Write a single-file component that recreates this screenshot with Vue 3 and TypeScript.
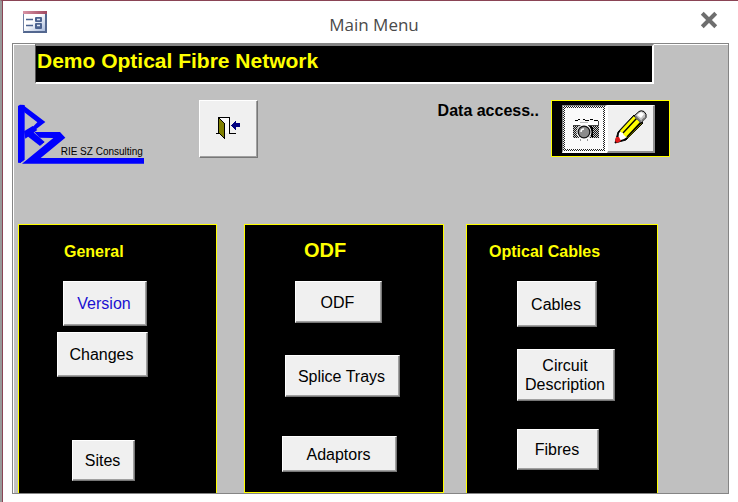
<script setup lang="ts">
import { ref } from 'vue'

interface MenuButton {
  label: string
  name: string
}

interface Panel {
  title: string
  name: string
  buttons: MenuButton[]
}

const panels: Panel[] = [
  {
    title: 'General',
    name: 'general',
    buttons: [
      { label: 'Version', name: 'version' },
      { label: 'Changes', name: 'changes' },
      { label: 'Sites', name: 'sites' },
    ],
  },
  {
    title: 'ODF',
    name: 'odf',
    buttons: [
      { label: 'ODF', name: 'frames' },
      { label: 'Splice Trays', name: 'trays' },
      { label: 'Adaptors', name: 'adaptors' },
    ],
  },
  {
    title: 'Optical Cables',
    name: 'optical',
    buttons: [
      { label: 'Cables', name: 'cables' },
      { label: 'Circuit Description', name: 'circuit' },
      { label: 'Fibres', name: 'fibres' },
    ],
  },
]

const access = ref<'view' | 'edit'>('view')
</script>

<template>
  <div class="window">
    <header class="titlebar">
      <svg class="form-icon" viewBox="0 0 24 22" aria-hidden="true">
        <defs>
          <linearGradient id="form-bg" x1="0" y1="0" x2="1" y2="1">
            <stop offset="0.4" stop-color="#ffffff" />
            <stop offset="1" stop-color="#a9bbdc" />
          </linearGradient>
          <linearGradient id="form-bar" x1="0" y1="0" x2="1" y2="0">
            <stop offset="0" stop-color="#d995a6" />
            <stop offset="1" stop-color="#a04860" />
          </linearGradient>
        </defs>
        <rect x="0" y="0" width="24" height="22" fill="#53678f" />
        <rect x="1" y="3" width="21" height="17" fill="url(#form-bg)" />
        <rect x="0" y="0" width="24" height="3" fill="url(#form-bar)" />
        <path d="M0 3V21" stroke="#8d9bb8" />
        <path d="M3 8.5H10M3 14.5H10" stroke="#4b628f" stroke-width="1.6" />
        <rect x="12" y="6" width="7" height="5" rx="1" fill="#4b628f" />
        <rect x="12" y="12" width="7" height="6" rx="1" fill="#4b628f" />
        <path d="M14 8.5H17M14 14.5H17" stroke="#dfe7f5" stroke-width="1.4" />
      </svg>
      <span class="caption">Main Menu</span>
      <button class="close" type="button" aria-label="Close">
        <svg viewBox="0 0 16 16" aria-hidden="true">
          <path d="M2 2L14 14M14 2L2 14" stroke="#6e6e6e" stroke-width="3.6" />
        </svg>
      </button>
    </header>

    <main class="form">
      <h1 class="network">Demo Optical Fibre Network</h1>

      <div class="tools">
        <svg class="logo" viewBox="54 42 378 180" role="img" aria-label="RIE SZ Consulting">
          <g fill="#0000fe">
            <polygon points="54,48 60,44 74,45 74,212 62,219 54,218" />
            <polygon points="68,44 136,96 101,123 90,119 112,97 73,67" />
            <polygon points="98,108 112,120 76,146 72,124" />
            <polygon points="82,124 95,122 135,157 121,169 74,132" />
            <polygon points="103,126 180,126 196,143 122,204 432,204 432,221 66,221 160,144 119,143" />
          </g>
          <path d="M62 220L82 205M119 170L140 153" stroke="#c0c0c0" stroke-width="3" />
          <text class="logo-text" x="182" y="194">RIE SZ Consulting</text>
        </svg>

        <button class="btn exit" type="button" aria-label="Exit">
          <svg viewBox="0 0 26 26" shape-rendering="crispEdges" aria-hidden="true">
            <rect x="3" y="3" width="10" height="15" fill="#fafafa" />
            <path d="M2 2.5H14M13.5 2V19M0 18.5H4M13 18.5H20" stroke="#000" fill="none" />
            <polygon points="2,2 9,8 9,25 2,18" fill="#000" />
            <polygon points="3,4 8,8 8,23 3,18" fill="#808000" />
            <path d="M16 9H17V8H18V7H19V6H20V8H24V12H20V15H19V14H18V13H17V12H16V11H15V10H16Z" fill="#000080" />
          </svg>
        </button>

        <div class="access">
          <span id="access-label" class="access-label">Data access..</span>
          <div class="access-frame" role="group" aria-labelledby="access-label">
            <button
              class="toggle"
              :class="{ pressed: access === 'view' }"
              type="button"
              aria-label="View"
              :aria-pressed="access === 'view'"
              @click="access = 'view'"
            >
              <svg class="camera" viewBox="0 0 28 22" shape-rendering="crispEdges" aria-hidden="true">
                <defs>
                  <pattern id="grip" width="2" height="2" patternUnits="userSpaceOnUse">
                    <rect width="2" height="2" fill="#c8c8c8" />
                    <rect width="1" height="1" fill="#111" />
                    <rect x="1" y="1" width="1" height="1" fill="#111" />
                  </pattern>
                </defs>
                <path d="M3 1.5H6M11 0.5H13M13 1.5H17M18 0.5H21M22 1.5H26M6 0.5H8" stroke="#000" />
                <rect x="1" y="3" width="26" height="4" fill="#fff" />
                <path d="M1 6.5H9M16 6.5H27M26.5 2V8" stroke="#444" />
                <rect x="1" y="7" width="26" height="12" fill="url(#grip)" />
                <path d="M19.5 7V18M18.5 7V17M20.5 8V18" stroke="#000" />
                <path d="M7.5 3.5H15.5" stroke="#bbb" />
                <g shape-rendering="auto">
                  <circle cx="12" cy="13" r="7.5" fill="#fff" />
                  <circle cx="12" cy="13" r="6.5" fill="#111" />
                  <circle cx="12" cy="13" r="5.2" fill="#8b8b8b" />
                  <path d="M9 13A3 3 0 0 1 12 10" stroke="#fff" stroke-width="1.4" fill="none" />
                </g>
                <path d="M8.5 20V22M15.5 20V22" stroke="#999" />
              </svg>
            </button>
            <button
              class="toggle"
              :class="{ pressed: access === 'edit' }"
              type="button"
              aria-label="Edit"
              :aria-pressed="access === 'edit'"
              @click="access = 'edit'"
            >
              <svg class="pencil" viewBox="0 0 34 34" aria-hidden="true">
                <polygon points="4,22 20,5 29,13 12,30 1,33" fill="#000" stroke="#000" />
                <polygon points="5,23 7,21 13,27 10,29 4,31" fill="#fff" />
                <polygon points="6,21 20,6 22,8 8,23" fill="#ffff00" />
                <polygon points="9,24 23,9 26,12 12,27" fill="#ffff00" />
                <path d="M13.500 28L27.500 13.500" stroke="#808000" />
                <path d="M20 6L25 1.500Q27 0 30 1.500Q33 4 32 7.500L27 13Z" fill="#c4c4c4" stroke="#000" />
                <path d="M23 5L27 2L30 4L27 8Z" fill="#fff" />
                <path d="M28 11L31 8" stroke="#777" stroke-width="2" />
                <path d="M21 6L27 12" stroke="#777" stroke-width="2" />
                <polygon points="2,27 5,27 7,31 3,33 1,31" fill="#e01818" />
              </svg>
            </button>
          </div>
        </div>
      </div>

      <div class="panels">
        <section v-for="panel in panels" :key="panel.name" class="panel" :class="panel.name">
          <h2>{{ panel.title }}</h2>
          <button
            v-for="item in panel.buttons"
            :key="item.name"
            class="btn"
            :class="item.name"
            type="button"
          >
            {{ item.label }}
          </button>
        </section>
      </div>
    </main>
  </div>
</template>

<style>
body {
  margin: 0;
  background: #fff;
}
</style>

<style scoped>
.window {
  box-sizing: border-box;
  min-height: 100vh;
  display: flex;
  flex-direction: column;
  padding: 0 9px 8px 10px;
  background: #fff;
  border-top: 1px solid #8a4455;
  border-left: 2px solid #999;
  box-shadow: inset 1px 0 #8a4455;
  font-family: "Liberation Sans", Arial, sans-serif;
}

.titlebar {
  display: grid;
  grid-template-columns: 1fr auto 1fr;
  align-items: center;
  height: 42px;
  padding: 0 11px;
}

.form-icon {
  width: 24px;
  height: 22px;
}

.caption {
  padding: 5px 0 0 7px;
  color: #4a4a4a;
  font: 17px "Open Sans", "Noto Sans", sans-serif;
}

.close {
  justify-self: end;
  display: flex;
  padding: 0 0 4px;
  border: 0;
  background: none;
}

.close svg {
  width: 18px;
  height: 18px;
}

.form {
  flex: 1;
  display: flex;
  flex-direction: column;
  background: #c0c0c0;
  border: 1px solid #858585;
  box-shadow: inset 1px 1px #fff;
}

.network {
  margin: 0 74px 0 22px;
  padding: 2px 1px 9px;
  background: #000;
  color: #ffff00;
  border: solid;
  border-width: 2px 2px 2px 1px;
  border-color: #858585 #fff #fff #555;
  font-size: 21px;
  line-height: 25px;
  font-weight: bold;
}

.tools {
  display: flex;
  align-items: flex-start;
  padding: 16px 58px 60px 5px;
}

.logo {
  width: 126px;
  height: 60px;
  margin-top: 4px;
}

.logo-text {
  font-size: 30px;
  fill: #000;
}

.btn {
  box-sizing: border-box;
  padding: 0 2px 0 0;
  color: #000;
  background: #f0f0f0;
  border: 1px solid;
  border-color: #fff #777 #777 #fff;
  box-shadow: inset -1px -1px #a0a0a0;
  font-family: inherit;
  font-size: 16px;
  line-height: 19px;
}

.exit {
  display: flex;
  justify-content: center;
  align-items: center;
  width: 59px;
  height: 58px;
  margin-left: 55px;
  padding: 0 0 2px;
}

.exit svg {
  width: 26px;
  height: 26px;
}

.access {
  display: flex;
  gap: 12px;
  margin-left: auto;
}

.access-label {
  padding-top: 2px;
  font-size: 16px;
  line-height: 18px;
  font-weight: bold;
}

.access-frame {
  display: flex;
  padding: 4px 14px 3px 10px;
  background: #000;
  border: 1px solid #ffff00;
}

.toggle {
  display: flex;
  justify-content: center;
  align-items: center;
  box-sizing: border-box;
  width: 48px;
  height: 48px;
  padding: 0 0 4px;
  background: #f0f0f0;
  border: solid;
  border-width: 1px 2px 2px 1px;
  border-color: #fff #909090 #909090 #fff;
}

.toggle.pressed {
  width: 45px;
  padding: 2px;
  background:
    linear-gradient(#fafafa, #fafafa) content-box no-repeat,
    repeating-conic-gradient(#222 0 25%, #fafafa 0 50%) padding-box 0 0 / 2px 2px;
  border-width: 1px 2px 2px 1px;
  border-color: #808080 #fff #fff #808080;
}

.camera {
  width: 28px;
  height: 22px;
  margin: 3px 0 0 3px;
}

.pencil {
  width: 34px;
  height: 34px;
}

.panels {
  flex: 1;
  display: grid;
  grid-template-columns: 204fr 200fr 192fr;
  column-gap: 22px;
  padding: 0 70px 0 5px;
}

.panel {
  display: flex;
  flex-direction: column;
  align-items: flex-start;
  background: #000;
  border: 1px solid #ffff00;
}

.general {
  margin-right: 5px;
  border-bottom: 0;
}

.optical {
  border-bottom: 0;
}

.panel h2 {
  margin: 0;
  padding: 17px 0 20px;
  color: #ffff00;
  font-size: 16px;
  line-height: 19px;
  font-weight: bold;
}

.general h2 {
  padding-left: 45px;
}

.odf h2 {
  padding: 13px 0 19px 59px;
  font-size: 20px;
  line-height: 24px;
}

.optical h2 {
  padding-left: 22px;
}

.version {
  width: 84px;
  height: 45px;
  margin-left: 44px;
  color: #1a10d0;
}

.changes {
  width: 91px;
  height: 45px;
  margin: 6px 0 0 38px;
}

.sites {
  width: 63px;
  height: 41px;
  margin: 63px 0 0 53px;
}

.frames {
  width: 87px;
  height: 42px;
  margin-left: 50px;
}

.trays {
  width: 115px;
  height: 42px;
  margin: 32px 0 0 40px;
}

.adaptors {
  width: 115px;
  height: 36px;
  margin: 39px 0 0 37px;
}

.cables {
  width: 80px;
  height: 46px;
  margin-left: 50px;
}

.circuit {
  width: 98px;
  height: 52px;
  margin: 22px 0 0 50px;
}

.fibres {
  width: 82px;
  height: 41px;
  margin: 28px 0 0 50px;
}
</style>
